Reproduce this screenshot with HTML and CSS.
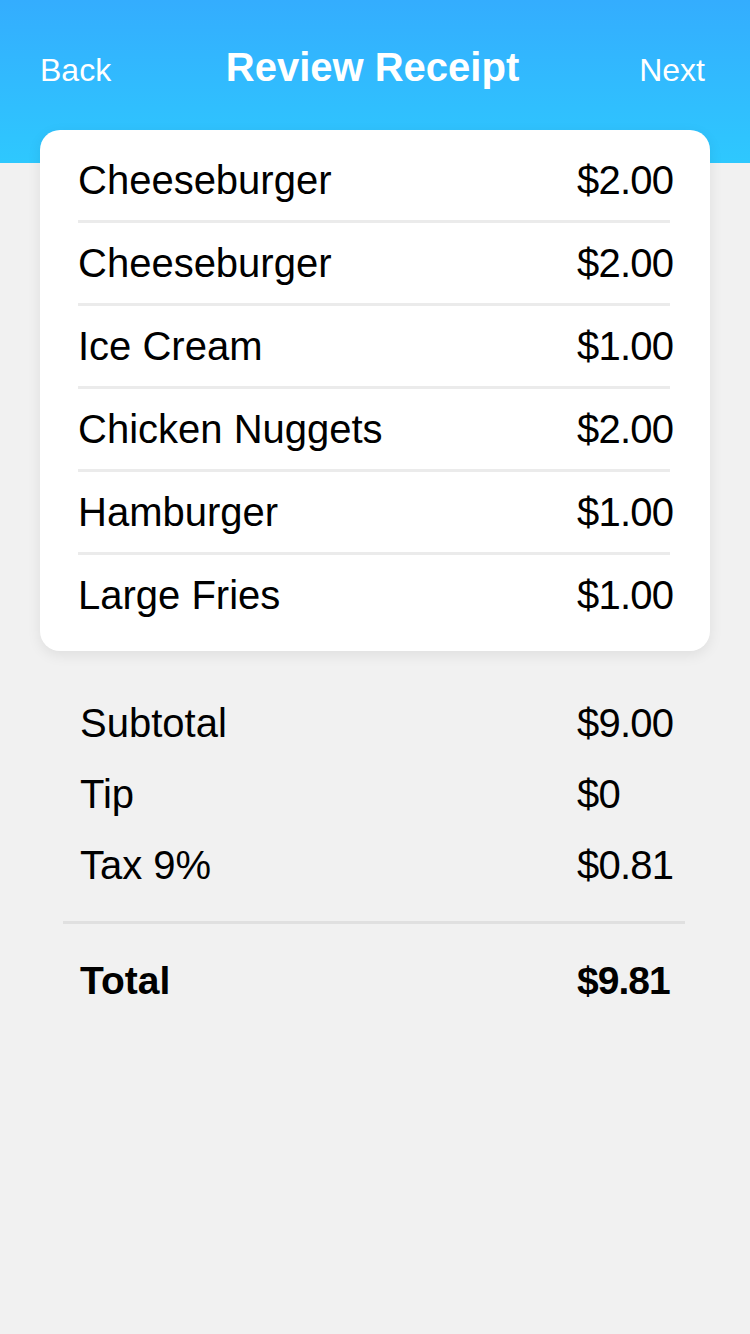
FILE: index.html
```
<!DOCTYPE html>
<html lang="en">
<head>
    <meta charset="UTF-8">
    <meta name="viewport" content="width=device-width, initial-scale=1.0">
    <title>Review Receipt</title>
    <link rel="stylesheet" href="styles.css">
</head>
<body>
    <header class="top-bar">
        <a class="nav-link back">Back</a>
        <h1 class="title">Review Receipt</h1>
        <a class="nav-link next">Next</a>
    </header>

    <div class="receipt-card">
        <div class="item-row"><span>Cheeseburger</span><span class="price">$2.00</span></div>
        <div class="item-row"><span>Cheeseburger</span><span class="price">$2.00</span></div>
        <div class="item-row"><span>Ice Cream</span><span class="price">$1.00</span></div>
        <div class="item-row"><span>Chicken Nuggets</span><span class="price">$2.00</span></div>
        <div class="item-row"><span>Hamburger</span><span class="price">$1.00</span></div>
        <div class="item-row"><span>Large Fries</span><span class="price">$1.00</span></div>
    </div>

    <div class="summary">
        <div class="summary-row"><span>Subtotal</span><span class="price">$9.00</span></div>
        <div class="summary-row"><span>Tip</span><span class="price">$0</span></div>
        <div class="summary-row"><span>Tax 9%</span><span class="price">$0.81</span></div>
        <div class="divider"></div>
        <div class="summary-row total"><span>Total</span><span class="price">$9.81</span></div>
    </div>
</body>
</html>
```

FILE: styles.css
```
body {
    margin: 0;
    width: 750px;
    min-height: 1334px;
    background-color: #f1f1f1;
    font-family: "Liberation Sans", Arial, sans-serif;
    color: #000;
}
.top-bar {
    height: 163px;
    box-sizing: border-box;
    padding: 42px 45px 0 40px;
    display: grid;
    grid-template-columns: 1fr auto 1fr;
    align-items: baseline;
    background: linear-gradient(to bottom, #34adfe, #2ec8fe);
    color: #fff;
}
.nav-link {
    font-size: 32px;
    line-height: 50px;
}
.next {
    text-align: right;
}
.title {
    margin: 0;
    font-size: 40px;
    line-height: 50px;
    font-weight: bold;
}
.receipt-card {
    margin: -33px 40px 0;
    padding: 10px 40px 16px 38px;
    background-color: #fff;
    border-radius: 20px;
    box-shadow: 0 4px 14px rgba(0, 0, 0, 0.08);
}
.item-row {
    display: grid;
    grid-template-columns: 499px 1fr;
    align-items: center;
    height: 80px;
    font-size: 40px;
    border-bottom: 3px solid #ebebeb;
}
.item-row:last-child {
    border-bottom: none;
}
.price {
    letter-spacing: -0.8px;
}
.summary {
    margin-top: 37px;
    padding: 0 65px 0 63px;
}
.summary-row {
    display: grid;
    grid-template-columns: 497px 1fr;
    align-items: center;
    height: 71px;
    padding-left: 17px;
    font-size: 40px;
}
.divider {
    height: 3px;
    margin-top: 20px;
    background-color: #e0e0e0;
}
.total {
    margin-top: 21px;
    font-size: 39px;
    font-weight: bold;
}
.total .price {
    letter-spacing: -1px;
}
```
